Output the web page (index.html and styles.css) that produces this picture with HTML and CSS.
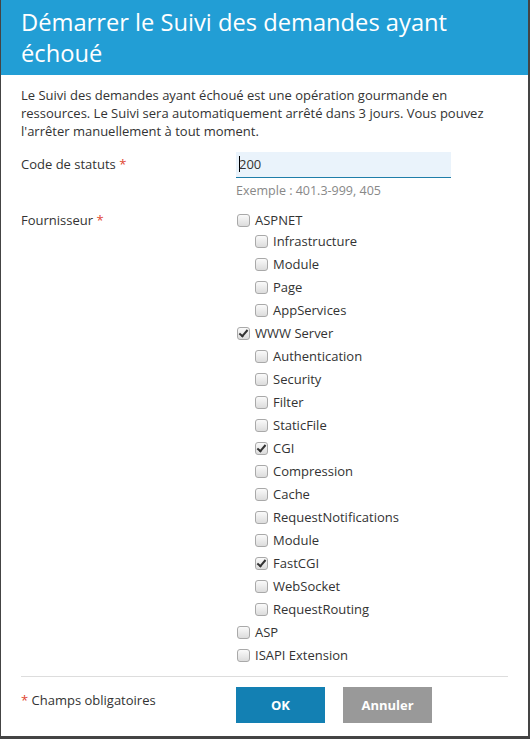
FILE: index.html
```html
<!DOCTYPE html>
<html lang="fr">
<head>
<meta charset="utf-8">
<link rel="stylesheet" href="styles.css">
</head>
<body>
<div class="dialog">
  <div class="header">
    <h1>Démarrer le Suivi des demandes ayant échoué</h1>
  </div>
  <div class="content">
    <p class="desc">Le Suivi des demandes ayant échoué est une opération gourmande en ressources. Le Suivi sera automatiquement arrêté dans 3 jours. Vous pouvez l'arrêter manuellement à tout moment.</p>
    <div class="row row-code">
      <div class="label">Code de statuts <span class="req">*</span></div>
      <div class="field">
        <div class="input"><span class="caret"></span>200</div>
        <div class="hint">Exemple : 401.3-999, 405</div>
      </div>
    </div>
    <div class="row row-prov">
      <div class="label">Fournisseur <span class="req">*</span></div>
      <div class="field list">
        <div class="item"><span class="cb"></span>ASPNET</div>
        <div class="item sub"><span class="cb"></span>Infrastructure</div>
        <div class="item sub"><span class="cb"></span>Module</div>
        <div class="item sub"><span class="cb"></span>Page</div>
        <div class="item sub"><span class="cb"></span>AppServices</div>
        <div class="item"><span class="cb on"></span>WWW Server</div>
        <div class="item sub"><span class="cb"></span>Authentication</div>
        <div class="item sub"><span class="cb"></span>Security</div>
        <div class="item sub"><span class="cb"></span>Filter</div>
        <div class="item sub"><span class="cb"></span>StaticFile</div>
        <div class="item sub"><span class="cb on"></span>CGI</div>
        <div class="item sub"><span class="cb"></span>Compression</div>
        <div class="item sub"><span class="cb"></span>Cache</div>
        <div class="item sub"><span class="cb"></span>RequestNotifications</div>
        <div class="item sub"><span class="cb"></span>Module</div>
        <div class="item sub"><span class="cb on"></span>FastCGI</div>
        <div class="item sub"><span class="cb"></span>WebSocket</div>
        <div class="item sub"><span class="cb"></span>RequestRouting</div>
        <div class="item"><span class="cb"></span>ASP</div>
        <div class="item"><span class="cb"></span>ISAPI Extension</div>
      </div>
    </div>
    <div class="footer">
      <div class="note"><span class="req">*</span> Champs obligatoires</div>
      <div class="buttons">
        <button class="btn ok">OK</button>
        <button class="btn cancel">Annuler</button>
      </div>
    </div>
  </div>
</div>
</body>
</html>
```
FILE: styles.css
```css
html, body {
  margin: 0;
  padding: 0;
  background: #fff;
}
body {
  font-family: "Open Sans", "Noto Sans", sans-serif;
  color: #333;
}
.dialog {
  box-sizing: border-box;
  width: 530px;
  height: 739px;
  border-left: 1px solid #444;
  border-right: 2px solid #444;
  border-bottom: 3px solid #444;
  background: #fff;
}
.header {
  background: #229ed5;
  height: 75px;
  box-sizing: border-box;
  padding: 7px 20px 0 20px;
}
.header h1 {
  margin: 0;
  font-weight: 400;
  font-size: 23.7px;
  line-height: 31px;
  color: #fff;
}
.content {
  padding: 0 20px;
}
.desc {
  margin: 11px 0 0 0;
  font-size: 13px;
  line-height: 18px;
}
.row {
  display: flex;
}
.row .label {
  width: 215px;
  flex: none;
  font-size: 13px;
  line-height: 18px;
}
.row-code {
  margin-top: 12px;
}
.row-code .label {
  padding-top: 3px;
}
.req {
  color: #e0462f;
}
.input {
  box-sizing: border-box;
  width: 215px;
  height: 26px;
  background: #eaf3fb;
  border-bottom: 1px solid #1f7ea9;
  font-size: 13px;
  line-height: 24px;
  padding-left: 3px;
  color: #333;
}
.caret {
  display: inline-block;
  width: 1px;
  height: 16px;
  background: #000;
  vertical-align: -3px;
  margin-right: -1px;
}
.hint {
  font-size: 12.5px;
  color: #888;
  line-height: 18px;
  margin-top: 4px;
}
.row-prov {
  margin-top: 11px;
}
.list {
  display: flex;
  flex-direction: column;
}
.item {
  display: flex;
  align-items: center;
  height: 18px;
  line-height: 18px;
  font-size: 13px;
  color: #333;
}
.item + .item {
  margin-top: 5px;
}
.list .item:nth-child(2) {
  margin-top: 3px;
}
.item.sub {
  padding-left: 18px;
}
.cb {
  box-sizing: border-box;
  width: 13px;
  height: 13px;
  border: 1px solid #a9a9a9;
  border-radius: 3px;
  background: linear-gradient(#fafafa, #dcdcdc);
  margin: 0 5px 0 1px;
  flex: none;
  position: relative;
}
.cb.on::after {
  content: "";
  position: absolute;
  left: 3px;
  top: 0;
  width: 3px;
  height: 7px;
  border: solid #333;
  border-width: 0 2px 2px 0;
  transform: rotate(40deg);
}
.footer {
  margin-top: 12px;
  border-top: 1px solid #ddd;
  display: flex;
  padding-top: 10px;
}
.note {
  width: 215px;
  font-size: 13px;
  line-height: 18px;
  padding-top: 4px;
}
.buttons {
  display: flex;
  gap: 18px;
}
.btn {
  border: none;
  width: 89px;
  height: 36px;
  font-family: "Open Sans", "Noto Sans", sans-serif;
  font-weight: 700;
  font-size: 13px;
  color: #fff;
  padding: 0;
}
.ok {
  background: #1380b3;
}
.cancel {
  background: #999;
}
```
